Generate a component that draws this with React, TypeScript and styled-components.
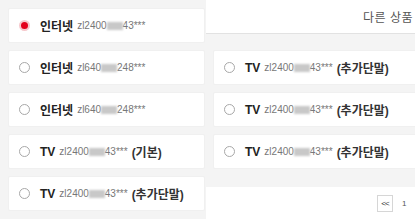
import styled, { createGlobalStyle } from "styled-components";

type Line = {
  kind: string;
  head: string;
  tail: string;
  note?: string;
  checked?: boolean;
};

const mine: Line[] = [
  { kind: "인터넷", head: "zl2400", tail: "43***", checked: true },
  { kind: "인터넷", head: "zl640", tail: "248***" },
  { kind: "인터넷", head: "zl640", tail: "248***" },
  { kind: "TV", head: "zl2400", tail: "43***", note: "(기본)" },
  { kind: "TV", head: "zl2400", tail: "43***", note: "(추가단말)" },
];

const others: Line[] = [
  { kind: "TV", head: "zl2400", tail: "43***", note: "(추가단말)" },
  { kind: "TV", head: "zl2400", tail: "43***", note: "(추가단말)" },
  { kind: "TV", head: "zl2400", tail: "43***", note: "(추가단말)" },
];

const Row = ({ line }: { line: Line }) => (
  <Card>
    <Radio $checked={!!line.checked} />
    <Kind>{line.kind}</Kind>
    <Code>
      {line.head}
      <Mask />
      {line.tail}
    </Code>
    {line.note && <Note>{line.note}</Note>}
  </Card>
);

export default function App() {
  return (
    <>
      <Global />
      <Page>
        <LeftPane>
          {mine.map((l, i) => (
            <Row key={i} line={l} />
          ))}
        </LeftPane>
        <RightPane>
          <Header>
            <HeaderText>다른 상품</HeaderText>
          </Header>
          <ListBox>
            {others.map((l, i) => (
              <Row key={i} line={l} />
            ))}
          </ListBox>
          <Pager>
            <PageButton>&lt;&lt;</PageButton>
            <PageNum>1</PageNum>
          </Pager>
        </RightPane>
      </Page>
    </>
  );
}

const Global = createGlobalStyle`
  html, body {
    margin: 0;
    padding: 0;
    background: #ffffff;
  }
  body {
    font-family: "Liberation Sans", "Noto Sans CJK KR", sans-serif;
  }
`;

const Page = styled.div`
  display: flex;
  width: 415px;
  height: 219px;
  overflow: hidden;
`;

const LeftPane = styled.div`
  width: 206px;
  flex: none;
  box-sizing: border-box;
  background: #f4f4f4;
  padding: 8px 1px 0 8px;
  display: flex;
  flex-direction: column;
  gap: 7px;
`;

const RightPane = styled.div`
  flex: 1;
  min-width: 0;
  background: #ffffff;
  display: flex;
  flex-direction: column;
  overflow: hidden;
`;

const Header = styled.div`
  height: 33px;
  display: flex;
  align-items: center;
  justify-content: flex-end;
  padding-right: 2px;
  white-space: nowrap;
`;

const HeaderText = styled.span`
  font-size: 12px;
  color: #555;
  letter-spacing: 0.5px;
`;

const ListBox = styled.div`
  width: 260px;
  box-sizing: border-box;
  background: #f4f4f4;
  border-top: 1px solid #e2e2e2;
  padding: 16px 0 18px 7px;
  display: flex;
  flex-direction: column;
  gap: 7px;
`;

const Card = styled.div`
  height: 35px;
  box-sizing: border-box;
  background: #ffffff;
  border: 1px solid #f0f0f0;
  border-radius: 2px;
  display: flex;
  align-items: center;
  padding-left: 10px;
  white-space: nowrap;
  overflow: hidden;
`;

const Radio = styled.span<{ $checked: boolean }>`
  width: 11px;
  height: 11px;
  flex: none;
  box-sizing: border-box;
  border-radius: 50%;
  margin-right: 10px;
  border: ${(p) => (p.$checked ? "2px solid #f6c8cc" : "1px solid #a8a8a8")};
  background: ${(p) => (p.$checked ? "#e3001b" : "#ffffff")};
`;

const Kind = styled.span`
  font-size: 12px;
  font-weight: bold;
  color: #222;
  margin-right: 4px;
`;

const Code = styled.span`
  font-size: 10px;
  color: #777;
  display: inline-flex;
  align-items: center;
  margin-right: 4px;
`;

const Mask = styled.span`
  display: inline-block;
  width: 16px;
  height: 8px;
  background: #c8c8c8;
  filter: blur(1.2px);
`;

const Note = styled.span`
  font-size: 12px;
  font-weight: bold;
  color: #333;
`;

const Pager = styled.div`
  display: flex;
  align-items: center;
  padding: 8px 0 0 171px;
  gap: 9px;
`;

const PageButton = styled.span`
  width: 16px;
  height: 17px;
  box-sizing: border-box;
  border: 1px solid #d6d6d6;
  display: flex;
  align-items: center;
  justify-content: center;
  font-size: 8px;
  color: #333;
  letter-spacing: -1px;
`;

const PageNum = styled.span`
  font-size: 8px;
  color: #555;
`;
